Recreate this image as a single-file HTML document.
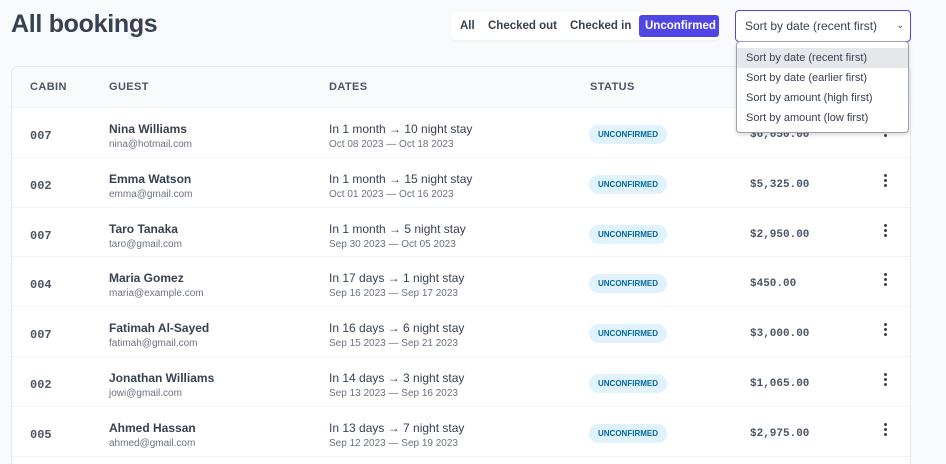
<!DOCTYPE html>
<html style="overflow:hidden;height:464px"><head><style>
*{box-sizing:border-box;margin:0;padding:0}
body{width:946px;height:464px;overflow:hidden;background:#f9fafb;font-family:"Liberation Sans",sans-serif;color:#374151;position:relative}
h1{position:absolute;left:11px;top:10px;font-size:25px;font-weight:700;color:#374151;letter-spacing:-0.3px}
.filter{position:absolute;left:451px;top:12px;width:268px;height:28px;background:#fff;border-radius:4px;box-shadow:0 1px 2px rgba(0,0,0,.05);font-size:11.5px;font-weight:600}
.filter span{position:absolute;top:5px;height:18px;line-height:18px}
.filter .act{background:#4f46e5;color:#fff;border-radius:3px;left:188px;top:3px;height:22px;line-height:22px;padding:0 6px;width:80px;text-align:center}
.sel{position:absolute;left:735px;top:10px;width:176px;height:32px;border:1px solid #4f46e5;border-radius:4px;background:#fff;font-size:12px;padding:8px 9px;color:#374151}
.sel i{position:absolute;right:6px;top:9px;font-style:normal;font-size:9px}
.dd{position:absolute;left:736px;top:41px;width:173px;height:92px;background:#fff;border:1px solid #9ca3af;border-radius:4px;font-size:11px;color:#374151;z-index:5;padding-top:6px;box-shadow:0 2px 4px rgba(0,0,0,.15)}
.dd div{height:20px;line-height:20px;padding-left:9px}
.dd .h{background:#e5e7eb}
.tbl{position:absolute;left:11px;top:66px;width:900px;height:410px;background:#fff;border:1px solid #e5e7eb;border-radius:7px;overflow:hidden}
.th{height:41px;background:#f9fafb;border-bottom:1px solid #f3f4f6;position:relative;font-size:11px;font-weight:700;letter-spacing:.4px;color:#4b5563}
.th span{position:absolute;top:14px}
.row{height:49.8px;border-bottom:1px solid #f3f4f6;position:relative}
.c{position:absolute;left:18px;top:21px;font-family:"Liberation Mono",monospace;font-weight:700;font-size:12px;color:#4b5563}
.n{position:absolute;left:97px;top:14px;font-size:12px;font-weight:600;color:#374151}
.e{position:absolute;left:97px;top:31px;font-size:10px;color:#6b7280}
.d{position:absolute;left:317px;top:14px;font-size:12px;font-weight:500;color:#374151}
.ds{position:absolute;left:317px;top:31px;font-size:10px;color:#6b7280}
.b{position:absolute;left:577px;top:17px;height:19px;line-height:19px;width:78px;text-align:center;background:#e0f2fe;color:#0369a1;border-radius:10px;font-size:8px;font-weight:700}
.a{position:absolute;left:738px;top:21px;font-family:"Liberation Mono",monospace;font-size:11px;font-weight:700;color:#4b5563}
.m{position:absolute;left:872px;top:16px;width:4px}
.m b{display:block;width:3px;height:3px;background:#374151;border-radius:50%;margin:0 0 2px 0}
</style></head><body>
<h1>All bookings</h1>
<div class="filter"><span style="left:9px">All</span><span style="left:37px">Checked out</span><span style="left:119px">Checked in</span><span class="act">Unconfirmed</span></div>
<div class="sel">Sort by date (recent first)<i>&#8964;</i></div>
<div class="dd"><div class="h">Sort by date (recent first)</div><div>Sort by date (earlier first)</div><div>Sort by amount (high first)</div><div>Sort by amount (low first)</div></div>
<div class="tbl">
<div class="th"><span style="left:18px">CABIN</span><span style="left:97px">GUEST</span><span style="left:317px">DATES</span><span style="left:578px">STATUS</span></div>
<div class="row"><span class="c">007</span><span class="n">Nina Williams</span><span class="e">nina@hotmail.com</span><span class="d">In 1 month → 10 night stay</span><span class="ds">Oct 08 2023 — Oct 18 2023</span><span class="b">UNCONFIRMED</span><span class="a">$6,050.00</span><span class="m"><b></b><b></b><b></b></span></div>
<div class="row"><span class="c">002</span><span class="n">Emma Watson</span><span class="e">emma@gmail.com</span><span class="d">In 1 month → 15 night stay</span><span class="ds">Oct 01 2023 — Oct 16 2023</span><span class="b">UNCONFIRMED</span><span class="a">$5,325.00</span><span class="m"><b></b><b></b><b></b></span></div>
<div class="row"><span class="c">007</span><span class="n">Taro Tanaka</span><span class="e">taro@gmail.com</span><span class="d">In 1 month → 5 night stay</span><span class="ds">Sep 30 2023 — Oct 05 2023</span><span class="b">UNCONFIRMED</span><span class="a">$2,950.00</span><span class="m"><b></b><b></b><b></b></span></div>
<div class="row"><span class="c">004</span><span class="n">Maria Gomez</span><span class="e">maria@example.com</span><span class="d">In 17 days → 1 night stay</span><span class="ds">Sep 16 2023 — Sep 17 2023</span><span class="b">UNCONFIRMED</span><span class="a">$450.00</span><span class="m"><b></b><b></b><b></b></span></div>
<div class="row"><span class="c">007</span><span class="n">Fatimah Al-Sayed</span><span class="e">fatimah@gmail.com</span><span class="d">In 16 days → 6 night stay</span><span class="ds">Sep 15 2023 — Sep 21 2023</span><span class="b">UNCONFIRMED</span><span class="a">$3,000.00</span><span class="m"><b></b><b></b><b></b></span></div>
<div class="row"><span class="c">002</span><span class="n">Jonathan Williams</span><span class="e">jowi@gmail.com</span><span class="d">In 14 days → 3 night stay</span><span class="ds">Sep 13 2023 — Sep 16 2023</span><span class="b">UNCONFIRMED</span><span class="a">$1,065.00</span><span class="m"><b></b><b></b><b></b></span></div>
<div class="row"><span class="c">005</span><span class="n">Ahmed Hassan</span><span class="e">ahmed@gmail.com</span><span class="d">In 13 days → 7 night stay</span><span class="ds">Sep 12 2023 — Sep 19 2023</span><span class="b">UNCONFIRMED</span><span class="a">$2,975.00</span><span class="m"><b></b><b></b><b></b></span></div>
</div>
</body></html>
